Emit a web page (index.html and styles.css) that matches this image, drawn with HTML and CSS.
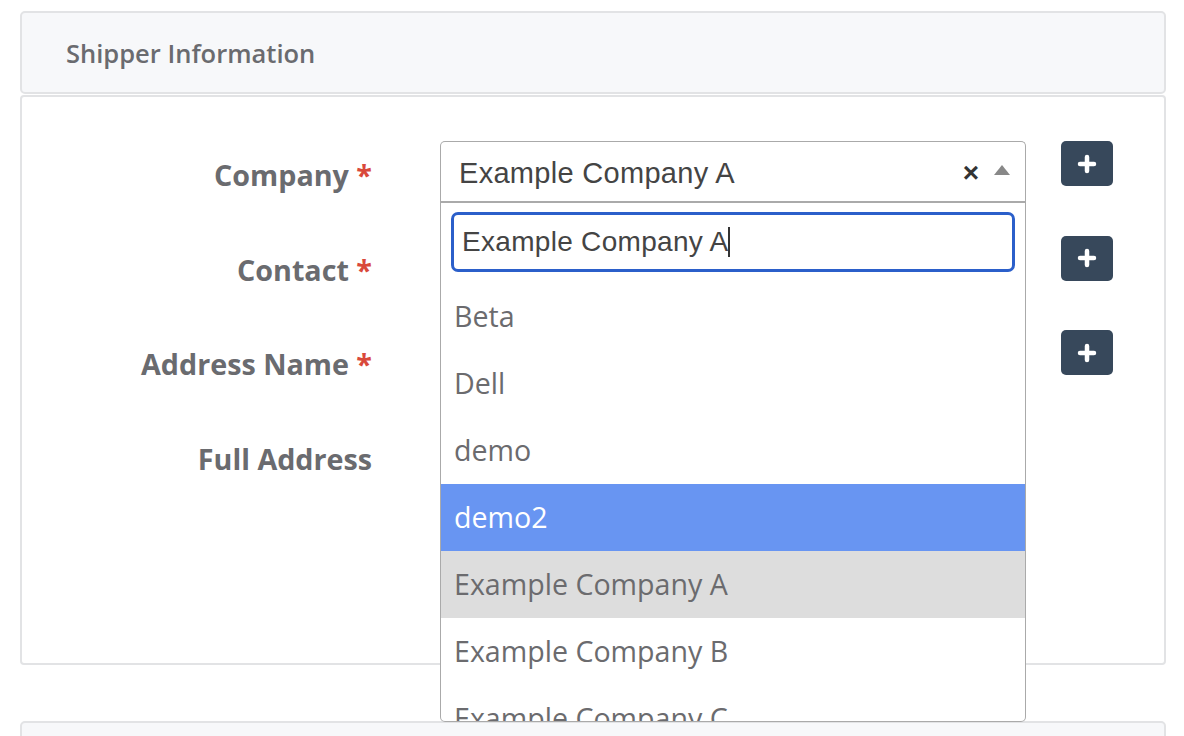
FILE: index.html
```html
<!DOCTYPE html>
<html lang="en">
<head>
  <meta charset="UTF-8">
  <meta name="viewport" content="width=device-width, initial-scale=1">
  <title>Shipper Information</title>
  <link rel="stylesheet" href="styles.css">
</head>
<body>
  <div class="page">
    <div class="panel-head">
      <h2>Shipper Information</h2>
    </div>

    <div class="panel-body">
      <div class="form-grid">
        <label class="form-label">Company <span class="req">*</span></label>
        <div class="field">
          <div class="combo">
            <div class="combo-selection">
              <span class="combo-value">Example Company A</span>
              <span class="combo-clear">&times;</span>
              <span class="combo-arrow"></span>
            </div>
            <div class="combo-dropdown">
              <div class="combo-search">
                <input type="text" value="Example Company A"><span class="caret"></span>
              </div>
              <ul class="combo-options">
                <li>Beta</li>
                <li>Dell</li>
                <li>demo</li>
                <li class="is-highlighted">demo2</li>
                <li class="is-selected">Example Company A</li>
                <li>Example Company B</li>
                <li>Example Company C</li>
              </ul>
            </div>
          </div>
        </div>
        <button class="btn-add" type="button" aria-label="Add company">
          <svg viewBox="0 0 20 20" width="20" height="20"><path d="M10 3v14M3 10h14" stroke="#fff" stroke-width="4.5" stroke-linecap="round"/></svg>
        </button>

        <label class="form-label">Contact <span class="req">*</span></label>
        <div class="field"><input class="input" type="text"></div>
        <button class="btn-add" type="button" aria-label="Add contact">
          <svg viewBox="0 0 20 20" width="20" height="20"><path d="M10 3v14M3 10h14" stroke="#fff" stroke-width="4.5" stroke-linecap="round"/></svg>
        </button>

        <label class="form-label">Address Name <span class="req">*</span></label>
        <div class="field"><input class="input" type="text"></div>
        <button class="btn-add" type="button" aria-label="Add address">
          <svg viewBox="0 0 20 20" width="20" height="20"><path d="M10 3v14M3 10h14" stroke="#fff" stroke-width="4.5" stroke-linecap="round"/></svg>
        </button>

        <label class="form-label">Full Address</label>
        <div class="field"><textarea class="input" rows="3"></textarea></div>
        <div></div>
      </div>
    </div>

    <div class="panel-head next"></div>
  </div>
</body>
</html>
```

FILE: styles.css
```css
:root {
  --head-bg: #f7f8fa;
  --line: #e2e3e5;
  --label: #6a6b6f;
  --req: #d9493b;
  --btn: #37485b;
  --focus: #2b5fca;
  --hl: #6895f2;
}

* {
  box-sizing: border-box;
  margin: 0;
  padding: 0;
}

body {
  font-family: 'Open Sans', sans-serif;
  background: #fff;
  color: var(--label);
}

.page {
  padding: 11px 18px 0 20px;
}

.panel-head {
  height: 83px;
  background: var(--head-bg);
  border: 2px solid var(--line);
  border-radius: 5px;
  padding: 0 0 0 44px;
  display: flex;
  align-items: center;
  margin-bottom: 1px;
}

.panel-head h2 {
  font-size: 25.5px;
  font-weight: 600;
  color: var(--label);
  margin-top: 1px;
}

.panel-head.next {
  margin-top: 56px;
}

.panel-body {
  height: 570px;
  border: 2px solid var(--line);
  border-radius: 4px;
  padding: 44px 0 0 0;
}

.form-grid {
  display: grid;
  grid-template-columns: 350px 654px 87px;
  grid-auto-rows: 46px;
  row-gap: 48.5px;
}

.form-label {
  text-align: right;
  font-size: 28.7px;
  font-weight: 700;
  line-height: 36px;
  padding-top: 16px;
  white-space: nowrap;
}

.req {
  color: var(--req);
}

.field {
  margin-left: 68px;
  position: relative;
}

.btn-add {
  margin-left: 35px;
  width: 52px;
  height: 45px;
  border: none;
  border-radius: 5px;
  background: var(--btn);
  display: flex;
  align-items: center;
  justify-content: center;
  cursor: pointer;
}

.input {
  width: 100%;
  height: 46px;
  border: 1px solid #ccc;
  border-radius: 4px;
}

/* select2-like combo, opened */
.combo {
  position: absolute;
  left: 0;
  right: 0;
  top: 0;
  z-index: 5;
}

.combo-selection {
  height: 60px;
  border: 1px solid #aaa;
  border-bottom: none;
  border-radius: 5px 5px 0 0;
  background: #fff;
  display: flex;
  align-items: center;
  padding: 0 15px 0 18px;
  font-family: 'Liberation Sans', Arial, sans-serif;
  color: #444;
}

.combo-value {
  flex: 1;
  font-size: 29px;
  letter-spacing: 0.3px;
  margin-top: 4px;
}

.combo-clear {
  font-size: 28px;
  font-weight: 700;
  color: #333;
  margin-right: 15px;
  margin-top: 2px;
}

.combo-arrow {
  width: 0;
  height: 0;
  border-left: 8px solid transparent;
  border-right: 8px solid transparent;
  border-bottom: 10px solid #888;
  margin-bottom: 3px;
}

.combo-dropdown {
  height: 521px;
  border: 1px solid #aaa;
  border-top: 2px solid #aaa;
  border-radius: 0 0 5px 5px;
  background: #fff;
  overflow: hidden;
}

.combo-search {
  margin: 9px 10px 0 10px;
  height: 60px;
  border: 3px solid var(--focus);
  border-radius: 7px;
  display: flex;
  align-items: center;
  padding-left: 8px;
}

.combo-search input {
  border: none;
  outline: none;
  font-family: 'Liberation Sans', Arial, sans-serif;
  font-size: 28px;
  letter-spacing: 0.3px;
  color: #444;
  width: auto;
  field-sizing: content;
  background: transparent;
}

.caret {
  width: 2px;
  height: 30px;
  background: #333;
  margin-left: -1px;
}

.combo-options {
  list-style: none;
  margin-top: 11px;
}

.combo-options li {
  height: 67px;
  line-height: 66px;
  padding-left: 13px;
  font-size: 28.6px;
  color: #6b6b6e;
}

.combo-options li.is-highlighted {
  background: var(--hl);
  color: #fff;
}

.combo-options li.is-selected {
  background: #ddd;
}
```
